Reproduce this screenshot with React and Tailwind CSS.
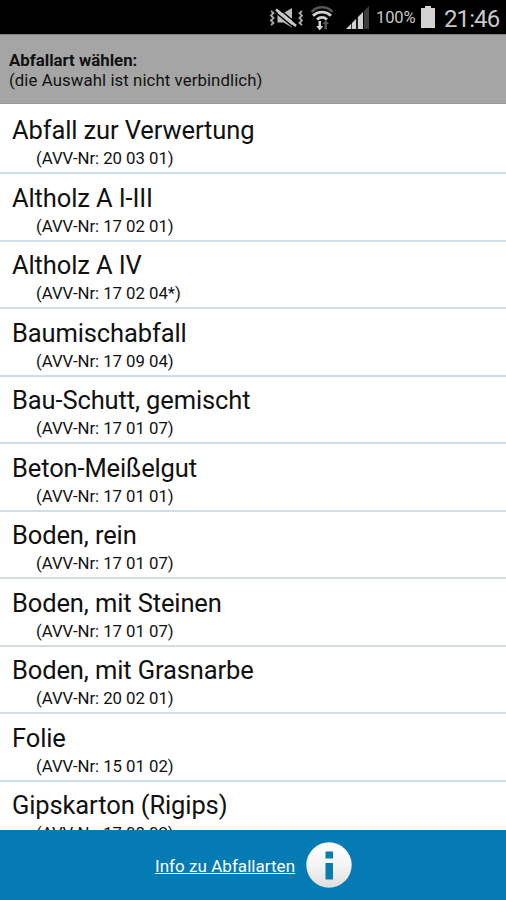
import React from "react";

const wasteTypes = [
    { name: "Abfall zur Verwertung", avv: "20 03 01" },
    { name: "Altholz A I-III", avv: "17 02 01" },
    { name: "Altholz A IV", avv: "17 02 04*" },
    { name: "Baumischabfall", avv: "17 09 04" },
    { name: "Bau-Schutt, gemischt", avv: "17 01 07" },
    { name: "Beton-Meißelgut", avv: "17 01 01" },
    { name: "Boden, rein", avv: "17 01 07" },
    { name: "Boden, mit Steinen", avv: "17 01 07" },
    { name: "Boden, mit Grasnarbe", avv: "20 02 01" },
    { name: "Folie", avv: "15 01 02" },
    { name: "Gipskarton (Rigips)", avv: "17 08 02" },
];

// Speaker crossed out, with vibration waves on both sides
const MutedIcon = () => (
    <svg width="34" height="22" viewBox="0 0 34 22" fill="none" className="mt-px ml-[269px] shrink-0">
        <path d="M8.500 6h6L23 1v19.500L14.500 15.500h-6z" fill="#bdbdbd" />
        <path d="M6 5l20 16.500M9 1l19 16" stroke="#000" strokeWidth="1.500" />
        <path d="M7 2.500l20 16.500" stroke="#cacaca" strokeWidth="2.800" />
        <path d="M2 4l2.500 2L2 8.500 4.500 11 2 13.500 4.500 16 2 18M33 4l-2.500 2L33 8.500 30.500 11l2.500 2.500-2.500 2.500 2.500 2" stroke="#a8a8a8" strokeWidth="1.800" />
    </svg>
);

const WifiIcon = () => (
    <svg width="24" height="26" viewBox="0 0 24 26" fill="none" className="mt-px ml-[7px] shrink-0">
        <path d="M1.500 7C7 .8 17 .8 22.500 7" stroke="#555" strokeWidth="2.500" />
        <path d="M3 10.800c5-5 13-5 18 0M7 14.500c3-2.800 7-2.800 10 0" stroke="#cfcfcf" strokeWidth="2.800" />
        <path d="M8.500 16H11v5h2.200L9.700 25.500 6.200 21h2.300z" fill="#d5d5d5" />
        <path d="M14.500 24.500V19h-2l3.200-4 3.300 4H17v5.500z" fill="#555" />
    </svg>
);

const SignalIcon = () => (
    <svg width="24" height="23" viewBox="0 0 24 23" className="ml-[12px] shrink-0">
        <path d="M0 23L23 0v23z" fill="#3c3c3c" />
        <path d="M0 23l5-5v5zM6 23v-6l4-4v10zM12 23V11l5-5v17z" fill="#d0d0d0" />
        <path d="M11 12v11M17.500 5.500V23" stroke="#000" strokeWidth="1" />
    </svg>
);

const BatteryIcon = () => (
    <svg width="14" height="22" viewBox="0 0 14 22" className="ml-[5px] shrink-0">
        <path d="M4 0h6v2h4v20H0V2h4z" fill="#d2d2d2" />
    </svg>
);

const StatusBar = () => (
    <div className="flex h-[34px] shrink-0 items-center bg-black text-[#c8c8c8]">
        <MutedIcon />
        <WifiIcon />
        <SignalIcon />
        <span className="ml-[6px] w-10 pt-[3px] text-[16.500px] tracking-[-0.100px] whitespace-nowrap">100%</span>
        <BatteryIcon />
        <span className="ml-[9px] pt-[3px] text-[24px] tracking-[-0.900px] whitespace-nowrap">21:46</span>
    </div>
);

const InfoIcon = () => (
    <svg width="46" height="46" viewBox="0 0 46 46" className="shrink-0">
        <defs>
            <linearGradient id="infoFill" x1="0" y1="0" x2="0" y2="1">
                <stop offset="0" stopColor="#ffffff" />
                <stop offset="0.500" stopColor="#f5f5f5" />
                <stop offset="1" stopColor="#dedede" />
            </linearGradient>
        </defs>
        <circle cx="23" cy="23" r="22.700" fill="url(#infoFill)" />
        <path d="M19.500 9.500h7.500v7h-7.500zM19.500 21h7.500v16.500h-7.500z" fill="#087bb0" />
    </svg>
);

const App = () => {
    return (
        <div className="flex h-screen w-full flex-col overflow-hidden bg-white font-['Roboto',sans-serif] text-[#111]">
            <StatusBar />

            {/* Header */}
            <header className="h-[70px] shrink-0 border-t border-b border-t-[#858585] border-b-[#999] bg-[#a5a5a5] pt-[15px] pl-[9px] text-[16.800px] leading-5">
                <h1 className="font-bold">Abfallart wählen:</h1>
                <p className="tracking-[0.08px]">(die Auswahl ist nicht verbindlich)</p>
            </header>

            {/* Waste type list */}
            <ul className="min-h-0 flex-1 overflow-hidden pt-[2.500px]">
                {wasteTypes.map((type) => (
                    <li key={type.name} className="h-[67.500px] border-b-2 border-[#cfdeeb] pt-[8.700px] pl-3">
                        <p className="text-[25.500px] leading-[30px] tracking-[-0.120px]">{type.name}</p>
                        <p className="pt-[3px] pl-6 text-[16.800px] leading-5 tracking-[-0.040px]">(AVV-Nr: {type.avv})</p>
                    </li>
                ))}
            </ul>

            {/* Footer */}
            <footer className="flex h-[70px] shrink-0 items-center bg-[#047bb2] pl-[155px] text-white">
                <a href="#info" className="mr-[11px] pt-[3px] text-[17px] tracking-[0.040px] whitespace-nowrap underline">Info zu Abfallarten</a>
                <InfoIcon />
            </footer>
        </div>
    );
};

export default App;
